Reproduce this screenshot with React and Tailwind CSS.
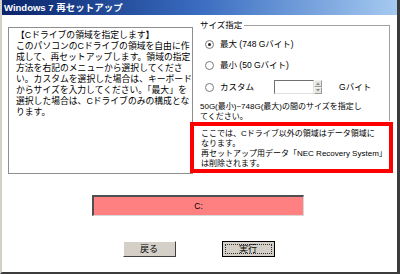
import React from "react"

const JP = { fontFamily: "'Liberation Sans', 'Noto Sans CJK JP', sans-serif" }

const LEFT_LINES = [
  "【Cドライブの領域を指定します】",
  "このパソコンのCドライブの領域を自由に作",
  "成して、再セットアップします。領域の指定",
  "方法を右記のメニューから選択してくださ",
  "い。カスタムを選択した場合は、キーボード",
  "からサイズを入力してください。「最大」を",
  "選択した場合は、Cドライブのみの構成とな",
  "ります。",
]

const NOTE_LINES = [
  "ここでは、Cドライブ以外の領域はデータ領域に",
  "なります。",
  "再セットアップ用データ「NEC Recovery System」",
  "は削除されます。",
]

function Lines({ lines, className }) {
  return (
    <p className={className}>
      {lines.map((l, i) => (
        <React.Fragment key={i}>
          {l}
          {i < lines.length - 1 && <br />}
        </React.Fragment>
      ))}
    </p>
  )
}

function Radio({ checked, label }) {
  return (
    <div className="flex items-center h-[12px]">
      <span className="w-[9px] h-[9px] rounded-full border border-[#7a7a7a] bg-white flex items-center justify-center">
        {checked && <span className="w-[3px] h-[3px] rounded-full bg-[#222]" />}
      </span>
      <span className="ml-[6px] text-[8.5px] leading-[12px]">{label}</span>
    </div>
  )
}

function SpinBtn({ up }) {
  return (
    <div className="w-[8px] h-[7px] bg-[#e8e6e0] border border-t-[#f4f4f4] border-l-[#f4f4f4] border-b-[#9a9a9a] border-r-[#9a9a9a] flex items-center justify-center">
      <svg width="4" height="3" viewBox="0 0 4 3">
        {up ? <path d="M0 3 L2 0.5 L4 3 Z" fill="#8a8a8a" /> : <path d="M0 0 L2 2.5 L4 0 Z" fill="#8a8a8a" />}
      </svg>
    </div>
  )
}

export default function App() {
  return (
    <div className="w-[400px] h-[274px] bg-white flex flex-col border-l-2 border-l-[#d4d0c8] border-r-[3px] border-r-[#3c3c3c] border-b-2 border-b-[#3c3c3c] text-black overflow-hidden" style={JP}>
      {/* Title bar */}
      <div className="h-[15px] shrink-0 -ml-[2px] pl-[4px] flex items-center bg-gradient-to-r from-[#0a246a] via-[#3a6cc0] to-[#a6caf0]">
        <span className="text-white font-bold text-[9.5px] leading-none">
          Windows 7 再セットアップ
        </span>
      </div>

      <div className="flex pt-[12px] pl-[6px]">
        {/* Left description */}
        <div className="w-[185px] h-[147px] shrink-0 border border-[#8e8e8e] pl-[7px] pt-[2px]">
          <Lines lines={LEFT_LINES} className="text-[8.8px] leading-[11px] whitespace-nowrap" />
        </div>

        {/* Right column */}
        <div className="flex flex-col w-[193px] ml-[7px] -mt-[8px]">
          <div className="flex items-center h-[12px]">
            <span className="text-[8.5px] leading-[12px]">サイズ指定</span>
            <div className="flex-1 h-[1px] bg-[#a0a0a0] ml-[2px] mr-[3px]" />
          </div>
          <div className="border-r border-[#a0a0a0] mr-[3px] -mt-[6px] pt-[13px] pl-[5px] flex flex-col gap-[9px]">
            <Radio checked label="最大 (748 Gバイト)" />
            <Radio label="最小 (50 Gバイト)" />
            <div className="flex items-center">
              <Radio label="カスタム" />
              <div className="ml-[20px] flex items-center">
                <div className="w-[40px] h-[14px] bg-white border border-t-[#707070] border-l-[#707070] border-b-[#e0e0e0] border-r-[#e0e0e0]" />
                <div className="flex flex-col">
                  <SpinBtn up />
                  <SpinBtn />
                </div>
              </div>
              <span className="ml-[17px] text-[8.5px] leading-[12px]">Gバイト</span>
            </div>
          </div>
          <div className="border-r border-[#a0a0a0] mr-[3px] pt-[8px]">
            <Lines lines={["50G(最小)~748G(最大)の間のサイズを指定し", "てください。"]} className="text-[8px] leading-[9.5px] whitespace-nowrap" />
          </div>
          <div className="-ml-[10px] mt-[1px] w-[203px] h-[51px] border-[4px] border-[#ff0000] pl-[7px] pt-[3px]">
            <Lines lines={NOTE_LINES} className="text-[8px] leading-[10px] whitespace-nowrap" />
          </div>
        </div>
      </div>

      {/* Drive bar */}
      <div className="flex justify-center mt-[21px] -ml-[3px]">
        <div className="w-[212px] h-[21px] bg-[#ff8080] border-t-2 border-l-2 border-t-[#505050] border-l-[#505050] border-b border-r border-b-[#d8d8d8] border-r-[#d8d8d8] flex items-center justify-center">
          <span className="text-[8.5px] leading-none">C:</span>
        </div>
      </div>

      {/* Buttons */}
      <div className="flex justify-center gap-[46px] mt-[25px] -ml-[2px]">
        <button className="w-[53px] h-[16px] bg-[#d4d0c8] border border-t-white border-l-white border-b-[#404040] border-r-[#404040] flex items-center justify-center">
          <span className="text-[9px] leading-none">戻る</span>
        </button>
        <button className="w-[53px] h-[16px] bg-[#d4d0c8] border border-black p-[2px] flex">
          <span className="flex-1 border border-dotted border-[#333] flex items-center justify-center text-[9px] leading-none">実行</span>
        </button>
      </div>
    </div>
  )
}
